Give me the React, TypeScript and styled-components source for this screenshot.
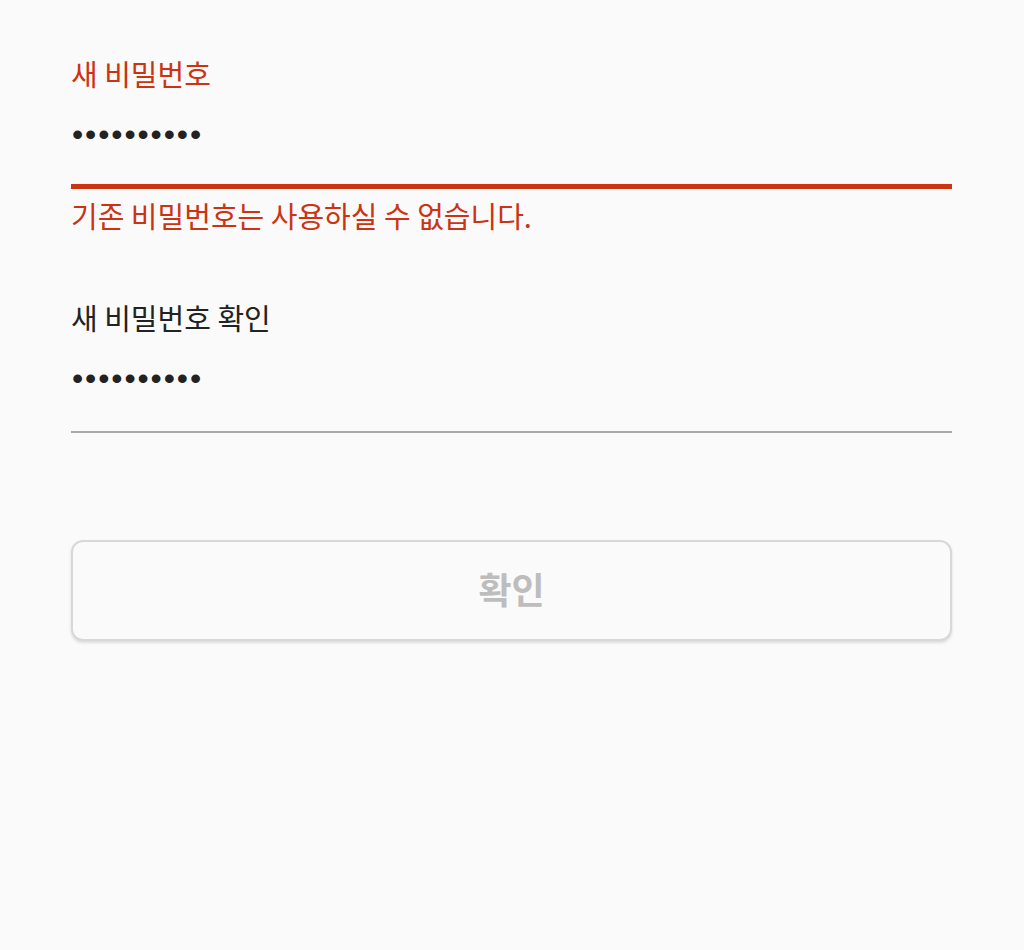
import React from 'react';
import styled, { createGlobalStyle } from 'styled-components';

const GlobalStyle = createGlobalStyle`
  html, body {
    margin: 0;
    padding: 0;
    background: #fafafa;
  }
  body {
    font-family: Roboto, "Noto Sans CJK KR", sans-serif;
  }
`;

const Page = styled.div`
  width: 1024px;
  height: 950px;
  background: #fafafa;
  padding: 53px 72px 0 71px;
  box-sizing: border-box;
  display: flex;
  flex-direction: column;
`;

const Field = styled.div<{ $gap?: number }>`
  display: flex;
  flex-direction: column;
  margin-bottom: ${({ $gap }) => $gap ?? 0}px;
`;

const Label = styled.div<{ $error?: boolean }>`
  font-family: "Noto Sans CJK KR", sans-serif;
  font-size: 29px;
  line-height: 40px;
  color: ${({ $error }) => ($error ? '#cc3312' : '#222222')};
`;

const Value = styled.div`
  font-family: "Liberation Sans", sans-serif;
  font-size: 32px;
  line-height: 40px;
  letter-spacing: 1.9px;
  color: #222222;
  margin-top: 21px;
  padding-left: 1px;
`;

const Underline = styled.div<{ $error?: boolean }>`
  height: ${({ $error }) => ($error ? 5 : 2)}px;
  background: ${({ $error }) => ($error ? '#cc3312' : '#a8a8a8')};
  margin-top: ${({ $error }) => ($error ? 30 : 33)}px;
`;

const ErrorText = styled.div`
  font-family: "Noto Sans CJK KR", sans-serif;
  font-size: 29px;
  line-height: 40px;
  color: #cc3312;
  margin-top: 6px;
`;

const Button = styled.button`
  margin-top: 107px;
  height: 101px;
  width: 100%;
  padding: 0 0 6px;
  border: 2px solid #d8d8d8;
  border-radius: 12px;
  background: #fafafa;
  box-shadow: 0 2px 3px rgba(0, 0, 0, 0.12);
  font-family: "Noto Sans CJK KR", sans-serif;
  font-size: 36px;
  font-weight: 700;
  color: #bdbdbd;
  cursor: default;
`;

export default function App() {
  return (
    <>
      <GlobalStyle />
      <Page>
        <Field $gap={62}>
          <Label $error>새 비밀번호</Label>
          <Value>••••••••••</Value>
          <Underline $error />
          <ErrorText>기존 비밀번호는 사용하실 수 없습니다.</ErrorText>
        </Field>
        <Field>
          <Label>새 비밀번호 확인</Label>
          <Value>••••••••••</Value>
          <Underline />
        </Field>
        <Button disabled>확인</Button>
      </Page>
    </>
  );
}
